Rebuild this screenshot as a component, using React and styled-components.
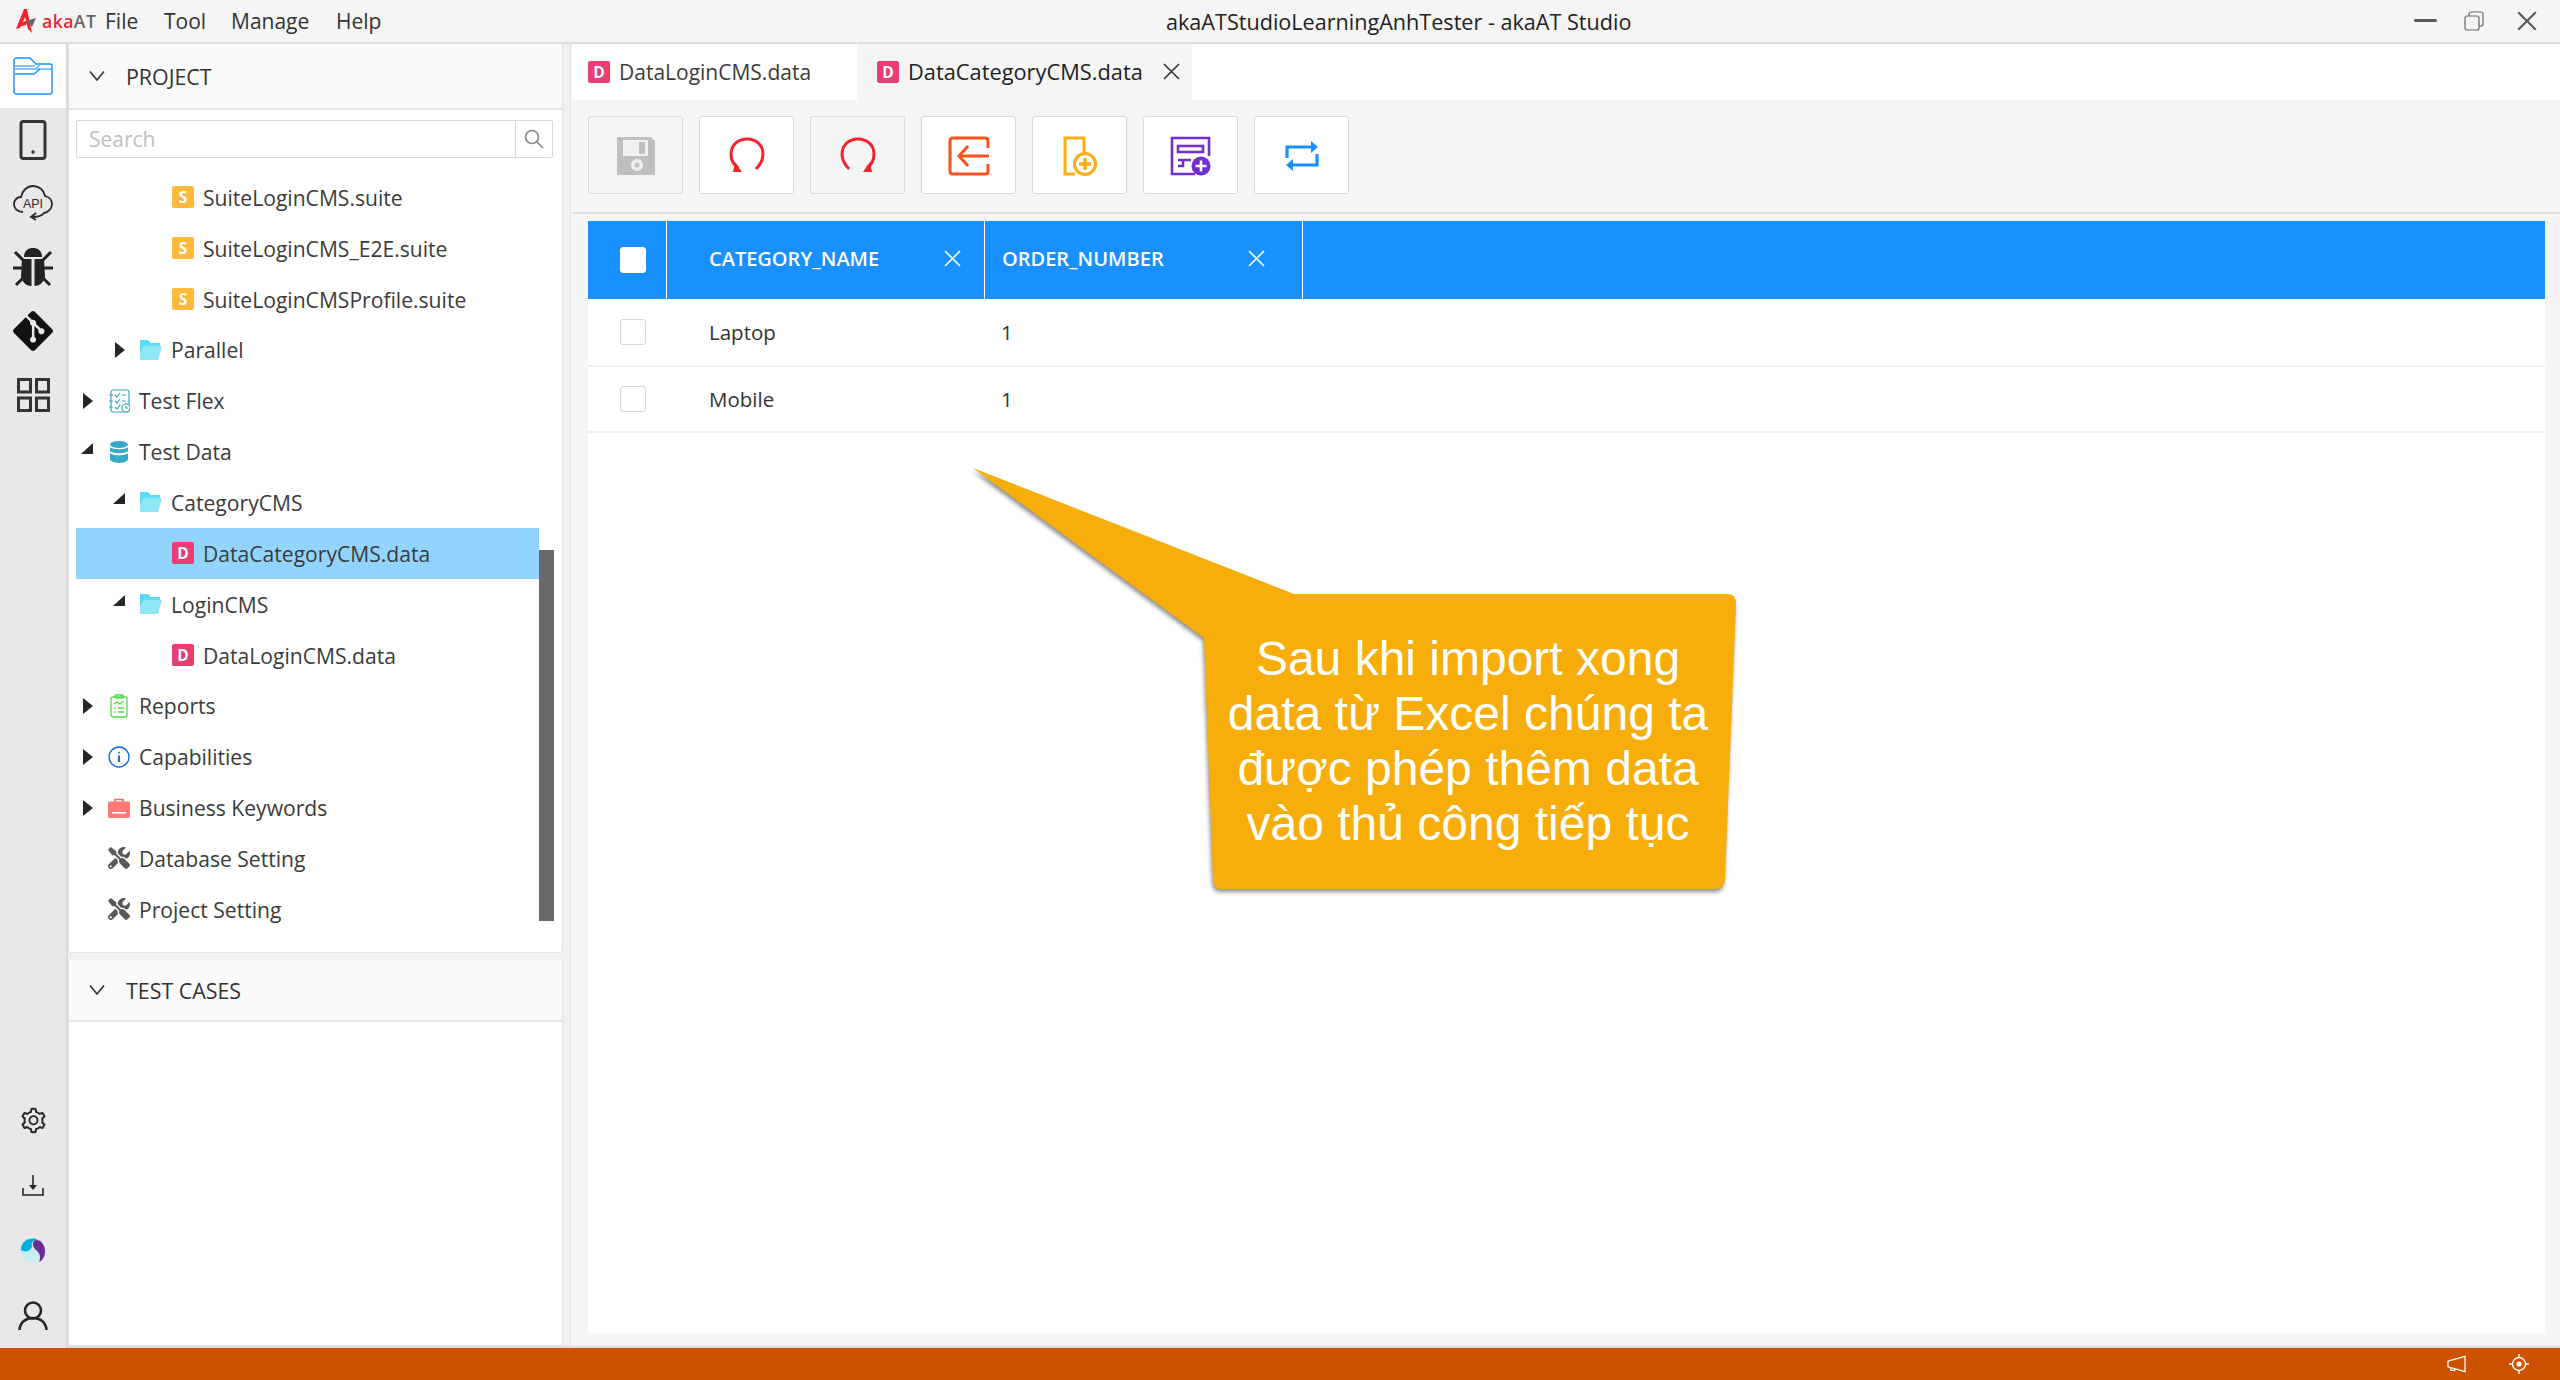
import React from 'react'
import styled, { createGlobalStyle } from 'styled-components'
import { SiGit } from 'react-icons/si'
import { AiOutlineSetting } from 'react-icons/ai'
import { FaTools } from 'react-icons/fa'

const GlobalStyle = createGlobalStyle`
  html, body { margin: 0; padding: 0; }
  body {
    width: 2560px;
    height: 1380px;
    overflow: hidden;
    font-family: "Open Sans", "Noto Sans", sans-serif;
    color: #333;
  }
  * { box-sizing: border-box; }
`

const Page = styled.div`
  width: 2560px;
  height: 1380px;
  display: flex;
  flex-direction: column;
  background: #f5f5f5;
`

const TitleBar = styled.div`
  height: 44px;
  flex: none;
  display: flex;
  align-items: center;
  background: #f5f5f5;
  border-bottom: 2px solid #dcdcdc;
`

const TitleLeft = styled.div`
  width: 1166px;
  display: flex;
  align-items: center;
  padding-left: 16px;
`

const LogoText = styled.span`
  margin-left: 6px;
  font-size: 17.5px;
  font-weight: 600;
  color: #f5222d;
  letter-spacing: 0.5px;
  width: 47px;
  em { font-style: normal; color: #666; }
`

const Menu = styled.div`
  display: flex;
  margin-left: 16px;
`

const MenuItem = styled.div`
  font-size: 21px;
  color: #333;
  width: ${p => p.$w}px;
`

const AppTitle = styled.div`
  width: 467px;
  font-size: 21.6px;
  color: #222;
  white-space: nowrap;
`

const WindowControls = styled.div`
  margin-left: auto;
  display: flex;
  align-items: center;
  gap: 27px;
  padding-right: 23px;
  height: 100%;
`

const CloseSlot = styled.span`
  display: flex;
  margin-left: 6px;
`

const Body = styled.div`
  flex: 1;
  min-height: 0;
  display: flex;
`

const Rail = styled.div`
  width: 68px;
  flex: none;
  display: flex;
  flex-direction: column;
  justify-content: space-between;
  background: #e8e8e8;
  border-right: 2px solid #d9d9d9;
`

const RailGroup = styled.div`
  display: flex;
  flex-direction: column;
`

const RailItem = styled.div`
  height: ${p => p.$h || 63.8}px;
  display: flex;
  align-items: center;
  justify-content: center;
  background: ${p => (p.$active ? '#fff' : 'transparent')};
  color: #222;
`

const Sidebar = styled.div`
  width: 503px;
  flex: none;
  display: flex;
  flex-direction: column;
  gap: 7px;
  padding-right: 7px;
  background: #f0f0f0;
  border-right: 1px solid #e4e4e4;
  border-bottom: 2px solid #dcdcdc;
`

const Panel = styled.div`
  display: flex;
  flex-direction: column;
  flex: ${p => (p.$grow ? 1 : 'none')};
  height: ${p => (p.$h ? `${p.$h}px` : 'auto')};
  background: #fff;
  border: 1px solid #e2e2e2;
  border-top: 0;
  border-radius: 0 0 3px 3px;
`

const PanelHead = styled.div`
  height: ${p => p.$h}px;
  flex: none;
  display: flex;
  align-items: center;
  padding-left: 20px;
  gap: 21px;
  background: #fafafa;
  border-bottom: 2px solid #e4e4e4;
  font-size: 21.4px;
  color: #333;
`

const SearchBox = styled.div`
  display: flex;
  width: 477px;
  height: 38px;
  margin: 10px 0 14px 7px;
  border: 1px solid #d9d9d9;
  border-radius: 2px;
`

const SearchInput = styled.div`
  flex: 1;
  padding-left: 12px;
  font-size: 21px;
  line-height: 36px;
  color: #bfbfbf;
`

const SearchBtn = styled.div`
  width: 37px;
  display: flex;
  align-items: center;
  justify-content: center;
  border-left: 1px solid #d9d9d9;
  color: #8c8c8c;
`

const TreeArea = styled.div`
  display: flex;
  margin-left: 7px;
`

const Tree = styled.div`
  width: 463px;
`

const TreeRow = styled.div`
  height: 50.85px;
  display: flex;
  align-items: center;
  padding-left: ${p => 7 + p.$level * 32}px;
  background: ${p => (p.$selected ? '#91d5ff' : 'transparent')};
  font-size: 21.1px;
  color: #3b3b3b;
`

const CaretSlot = styled.span`
  width: ${p => (p.$open ? 27 : 25)}px;
  flex: none;
  display: flex;
  align-items: center;
  margin-top: ${p => (p.$open ? -6 : 0)}px;
  margin-left: ${p => (p.$open ? -2 : 0)}px;
`

const IconSlot = styled.span`
  width: 22px;
  height: 24px;
  flex: none;
  display: flex;
  align-items: center;
  justify-content: center;
  margin-right: 9px;
`

const Badge = styled.span`
  width: 22px;
  height: 22px;
  flex: none;
  display: flex;
  align-items: center;
  justify-content: center;
  border-radius: 2px;
  background: ${p => (p.$kind === 'S' ? '#ffba3b' : '#ec3d72')};
  color: #fff;
  font-size: 15.5px;
  font-weight: 700;
`

const ScrollTrack = styled.div`
  width: 15px;
`

const ScrollThumb = styled.div`
  width: 15px;
  height: 371px;
  margin-top: 378px;
  background: #696969;
`

const Main = styled.div`
  flex: 1;
  min-width: 0;
  display: flex;
  flex-direction: column;
  padding-left: 1px;
  background: #f5f5f5;
  border-bottom: 2px solid #dcdcdc;
`

const Tabs = styled.div`
  height: 56px;
  flex: none;
  display: flex;
  background: #fff;
`

const Tab = styled.div`
  width: ${p => p.$w}px;
  display: flex;
  align-items: center;
  gap: 9px;
  padding-left: ${p => p.$pad}px;
  padding-bottom: 1px;
  background: ${p => (p.$active ? '#f5f5f5' : '#fff')};
  font-size: ${p => (p.$active ? 21.8 : 21)}px;
  font-weight: ${p => (p.$active ? 500 : 400)};
  color: ${p => (p.$active ? '#222' : '#3b3b3b')};
`

const TabClose = styled.span`
  display: flex;
  margin-left: 11px;
`

const Toolbar = styled.div`
  height: 114px;
  flex: none;
  display: flex;
  gap: 16px;
  padding: 16px 0 0 16px;
  border-bottom: 2px solid #dedede;
`

const ToolButton = styled.div`
  width: 95px;
  height: 78px;
  display: flex;
  align-items: center;
  justify-content: center;
  padding-top: 1px;
  background: ${p => (p.$muted ? '#f5f5f5' : '#fff')};
  border: 1px solid #d9d9d9;
  border-radius: 3px;
`

const Content = styled.div`
  flex: 1;
  min-height: 0;
  position: relative;
  margin: 7px 15px 13px 16px;
  background: #fff;
`

const HeaderRow = styled.div`
  height: 78px;
  display: flex;
  align-items: stretch;
  background: #1890ff;
  color: #fff;
  font-size: 20px;
  font-weight: 600;
`

const CheckCell = styled.div`
  width: 78px;
  flex: none;
  display: flex;
  align-items: center;
  padding-left: 32px;
`

const HeadCell = styled.div`
  width: ${p => p.$w}px;
  flex: none;
  display: flex;
  align-items: center;
  justify-content: space-between;
  padding: 0 ${p => p.$right}px 3px ${p => p.$left}px;
  border-left: 1px solid #fff;
  border-right: ${p => (p.$last ? '1px solid #fff' : '0')};
`

const Check = styled.span`
  width: 26px;
  height: 26px;
  background: #fff;
  border: 1px solid ${p => (p.$head ? '#fff' : '#d9d9d9')};
  border-radius: 3px;
`

const DataRow = styled.div`
  height: ${p => p.$h}px;
  display: flex;
  align-items: center;
  border-bottom: 2px solid #f0f0f0;
  font-size: 20.5px;
  font-weight: 500;
  color: #333;
`

const NameCell = styled.div`
  width: 293px;
  flex: none;
  padding-left: 43px;
`

const OrderCell = styled.div`
  padding-left: 42px;
`

const Callout = styled.div`
  position: absolute;
  left: 382px;
  top: 244px;
  width: 770px;
  height: 430px;
`

const CalloutShape = styled.svg`
  position: absolute;
  inset: 0;
  filter: drop-shadow(-1px 3px 2px rgba(0, 0, 0, 0.45));
`

const CalloutText = styled.div`
  position: absolute;
  left: 243px;
  top: 166px;
  width: 510px;
  text-align: center;
  font-family: "Liberation Sans", Arial, sans-serif;
  font-size: 48px;
  line-height: 55px;
  color: #fff;
`

const StatusBar = styled.div`
  height: 32px;
  flex: none;
  display: flex;
  align-items: center;
  justify-content: flex-end;
  gap: 43px;
  padding-right: 31px;
  background: #cc5200;
`

const Chevron = () => (
  <svg width="16" height="12" viewBox="0 0 16 12" fill="none" stroke="#333" strokeWidth="1.6">
    <path d="M1 1.5 L8 10 L15 1.5" />
  </svg>
)

const Cross = ({ color = '#333', size = 17, width = 1.6 }) => (
  <svg width={size} height={size} viewBox="0 0 17 17" fill="none" stroke={color} strokeWidth={width}>
    <path d="M1 1 L16 16 M16 1 L1 16" />
  </svg>
)

const Caret = ({ open }) =>
  open ? (
    <svg width="13" height="12" viewBox="0 0 13 12"><path d="M12 0 V11 H0 Z" fill="#262626" /></svg>
  ) : (
    <svg width="10" height="16" viewBox="0 0 10 16"><path d="M0 0 L10 8 L0 16 Z" fill="#262626" /></svg>
  )

const FolderIcon = () => (
  <svg width="22" height="20" viewBox="0 0 22 20">
    <path d="M0 0 H8 L11 3 H20 V7 H4 L0 20 Z" fill="#5cdbf7" />
    <path d="M4 6 H22 L18 20 H0 V12 Z" fill="#8fe6f5" />
  </svg>
)

const FlexIcon = () => (
  <svg width="22" height="24" viewBox="0 0 22 24" fill="none" stroke="#3aa7c2" strokeWidth="1.2">
    <rect x="3" y="1" width="18" height="22" rx="2" />
    <path d="M1 6 H5 M1 12 H5 M1 18 H5" />
    <path d="M7 6 L9 8 L12 4 M7 12 L9 14 L12 10 M7 18 L9 20 L12 16 M14 6 H18 M14 12 H18" />
    <circle cx="18" cy="19" r="4" fill="#fff" />
    <path d="M18 17 V19 H20" />
  </svg>
)

const DbIcon = () => (
  <svg width="18" height="22" viewBox="0 0 18 22" fill="#36a9c4">
    <ellipse cx="9" cy="3.5" rx="9" ry="3.5" />
    <path d="M0 6 C2 9 16 9 18 6 V10 C16 13 2 13 0 10 Z" />
    <path d="M0 12 C2 15 16 15 18 12 V18.5 C16 23 2 23 0 18.5 Z" />
  </svg>
)

const ReportIcon = () => (
  <svg width="18" height="24" viewBox="0 0 18 24" fill="none" stroke="#52d94a" strokeWidth="1.3">
    <rect x="1" y="3" width="16" height="20" rx="2" />
    <rect x="5" y="1" width="8" height="3" rx="1" />
    <path d="M4 10 L7 8 L10 10 L14 7 M4 14 H5.5 M8 14 H14 M4 18 H5.5 M8 18 H14" />
  </svg>
)

const InfoIcon = () => (
  <svg width="22" height="22" viewBox="0 0 22 22" fill="none" stroke="#1668dc" strokeWidth="1.4">
    <circle cx="11" cy="11" r="10" />
    <path d="M11 9.5 V16" strokeWidth="2" />
    <circle cx="11" cy="6.5" r="1" fill="#1668dc" stroke="none" />
  </svg>
)

const CaseIcon = () => (
  <svg width="22" height="20" viewBox="0 0 22 20">
    <path d="M7 4 V1.5 H15 V4" fill="none" stroke="#f56a6a" strokeWidth="1.6" />
    <rect y="3.5" width="22" height="16.5" rx="2" fill="#ff7875" />
    <rect x="4" y="14" width="14" height="1.6" fill="#fff" />
  </svg>
)

const ToolsIcon = () => <FaTools size={22} color="#595959" />

const Floppy = () => (
  <svg width="40" height="40" viewBox="0 0 40 40">
    <path d="M1 1 H35 L39 5 V39 H1 Z" fill="#bfbfbf" />
    <rect x="7" y="4" width="25" height="16" fill="#f0f0f0" />
    <rect x="23" y="6" width="6" height="12" fill="#bfbfbf" />
    <circle cx="21" cy="29" r="6" fill="#f0f0f0" />
    <circle cx="21" cy="29" r="2.5" fill="#bfbfbf" />
  </svg>
)

const RotateArrow = ({ flip }) => (
  <svg width="40" height="40" viewBox="0 0 40 40" fill="none" style={flip ? { transform: 'scaleX(-1)' } : undefined}>
    <path d="M29 33 C33 29 36 24 36 18 C36 9 29 3 20 3 C11 3 4 9 4 18 C4 24 7 29 11 32" stroke="#f5222d" strokeWidth="3" />
    <path d="M6 36 L15 36 L8 26 Z" fill="#f5222d" />
  </svg>
)

const ImportIcon = () => (
  <svg width="42" height="40" viewBox="0 0 42 40" fill="none" stroke="#fa541c" strokeWidth="3">
    <path d="M40 12 V5 C40 3 39 2 37 2 H5 C3 2 2 3 2 5 V35 C2 37 3 38 5 38 H37 C39 38 40 37 40 35 V28" />
    <path d="M41 20 H11 M20 10 L11 20 L20 30" />
  </svg>
)

const FilePlusIcon = () => (
  <svg width="34" height="40" viewBox="0 0 34 40" fill="none" stroke="#faad14" strokeWidth="3">
    <path d="M12 38 H2 V2 H21 V17" />
    <circle cx="22" cy="28" r="10.5" fill="#fff" />
    <path d="M22 22 V34 M16 28 H28" strokeWidth="3.4" />
  </svg>
)

const FormPlusIcon = () => (
  <svg width="42" height="40" viewBox="0 0 42 40" fill="none" stroke="#722ed1" strokeWidth="2.6">
    <path d="M25 38 H2 V2 H39 V20" />
    <rect x="8" y="10" width="25" height="6" />
    <path d="M8 24 H21 M8 30 H13 V24" />
    <circle cx="31" cy="30" r="9.5" fill="#722ed1" stroke="none" />
    <path d="M31 24.5 V35.5 M25.5 30 H36.5" stroke="#fff" strokeWidth="2.6" />
  </svg>
)

const SwapIcon = () => (
  <svg width="34" height="32" viewBox="0 0 34 32" fill="none" stroke="#1890ff" strokeWidth="3.2">
    <path d="M2 18 V7 H28" />
    <path d="M32 14 V25 H6" />
    <path d="M26 1 L33 7 L26 13 Z" fill="#1890ff" stroke="none" />
    <path d="M8 19 L1 25 L8 31 Z" fill="#1890ff" stroke="none" />
  </svg>
)

const LogoMark = () => (
  <svg width="20" height="24" viewBox="0 0 20 24">
    <path d="M8 0 L11 0 L16 24 L12 20 L9 8 L4 19 L0 20 Z" fill="#f5222d" />
    <path d="M10 12 L20 9 L16 18 Z" fill="#666" />
    <path d="M2 14 L12 11.5 L10 16 L2 18 Z" fill="#f5222d" />
  </svg>
)

const FolderRail = () => (
  <svg width="40" height="38" viewBox="0 0 40 38" fill="none" stroke="#1890ff" strokeWidth="1.4">
    <path d="M1 36 V3 C1 2 2 1 3 1 H17 L23 7 H37 C38 7 39 8 39 9 V35 C39 36 38 37 37 37 H3 C2 37 1 36 1 35" />
    <path d="M2 9 H22 M2 12 H39 M22 12 L27 8" strokeOpacity="0.7" />
    <path d="M2 17 H21 L27 12" />
  </svg>
)

const PhoneIcon = () => (
  <svg width="28" height="40" viewBox="0 0 28 40" fill="none" stroke="#333" strokeWidth="3">
    <rect x="2" y="1.5" width="24" height="37" rx="2.5" />
    <circle cx="14" cy="32" r="1.7" fill="#333" stroke="none" />
  </svg>
)

const ApiIcon = () => (
  <svg width="40" height="36" viewBox="0 0 40 36" fill="none" stroke="#2b2b2b" strokeWidth="1.8">
    <path d="M10 27 C4 27 1 23 1 19 C1 15 4 12 8 12 C9 6 14 1 20 1 C26 1 31 5 32 11 C36 12 39 15 39 19 C39 23 36 27 31 28 C29 31 25 32 19 32" />
    <path d="M23 28 L18 32 L23 35" />
    <text x="20" y="23" textAnchor="middle" fontSize="12.5" fontFamily="'Liberation Sans', sans-serif" fill="#2b2b2b" stroke="none">API</text>
  </svg>
)

const BugIcon = () => (
  <svg width="40" height="42" viewBox="0 0 40 42" fill="#222">
    <path d="M11 11 C11 5 15 2 20 2 C25 2 29 5 29 11 Z" />
    <path d="M9 13 H18.5 V40 C13 40 9 36 8 30 Z" />
    <path d="M31 13 H21.5 V40 C27 40 31 36 32 30 Z" />
    <path d="M2 6 L10 14 M38 6 L30 14 M0 22 H9 M40 22 H31 M3 39 L10 32 M37 39 L30 32" stroke="#222" strokeWidth="3" />
  </svg>
)

const GridIcon = () => (
  <svg width="33" height="34" viewBox="0 0 33 34" fill="none" stroke="#333" strokeWidth="3">
    <rect x="1.5" y="1.5" width="12" height="12.5" />
    <rect x="19.5" y="1.5" width="12" height="12.5" />
    <rect x="1.5" y="20" width="12" height="12.5" />
    <rect x="19.5" y="20" width="12" height="12.5" />
  </svg>
)

const DownloadIcon = () => (
  <svg width="22" height="21" viewBox="0 0 22 21" fill="none" stroke="#262626" strokeWidth="1.6">
    <path d="M1 13 V20 H21 V13" />
    <path d="M11 0 V12" />
    <path d="M7 10 L15 10 L11 15 Z" fill="#262626" stroke="none" />
  </svg>
)

const SwirlIcon = () => (
  <svg width="26" height="26" viewBox="0 0 26 26">
    <circle cx="13" cy="13" r="12.5" fill="#cbecf1" />
    <path d="M1 12 C1 5 6 .5 13 .5 C15 .5 17 1 18 1.5 C13 2 11 5 12 8 C11 13 6 15 1 12 Z" fill="#00afd7" />
    <path d="M14 3 C18 0 25 5 25 13 C25 18 23 22 19 24 C21 19 20 15 16 12 C13 9 12 6 14 3 Z" fill="#6a2c91" />
  </svg>
)

const UserIcon = () => (
  <svg width="30" height="30" viewBox="0 0 30 30" fill="none" stroke="#262626" strokeWidth="2.6">
    <circle cx="15" cy="9.5" r="8" />
    <path d="M1.5 29 C2 21 8 17 15 17 C22 17 28 21 28.5 29" />
  </svg>
)

const SearchIcon = () => (
  <svg width="20" height="20" viewBox="0 0 20 20" fill="none" stroke="#8c8c8c" strokeWidth="1.7">
    <circle cx="8" cy="8" r="6.5" />
    <path d="M12.8 12.8 L19 19" />
  </svg>
)

const MegaphoneIcon = () => (
  <svg width="19" height="18" viewBox="0 0 20 18" fill="none" stroke="#fff" strokeWidth="1.3">
    <path d="M19 1 V17 L1 12 V6 Z" />
    <path d="M4 13 V15.5 L8 16 L8.6 14" />
  </svg>
)

const LocateIcon = () => (
  <svg width="20" height="20" viewBox="0 0 20 20" fill="none" stroke="#fff" strokeWidth="1.4">
    <circle cx="10" cy="10" r="6.5" />
    <circle cx="10" cy="10" r="2.6" fill="#fff" stroke="none" />
    <path d="M10 0 V3.5 M10 16.5 V20 M0 10 H3.5 M16.5 10 H20" />
  </svg>
)

const treeRows = [
  { level: 2, badge: 'S', label: 'SuiteLoginCMS.suite' },
  { level: 2, badge: 'S', label: 'SuiteLoginCMS_E2E.suite' },
  { level: 2, badge: 'S', label: 'SuiteLoginCMSProfile.suite' },
  { level: 1, caret: 'closed', icon: <FolderIcon />, label: 'Parallel' },
  { level: 0, caret: 'closed', icon: <FlexIcon />, label: 'Test Flex' },
  { level: 0, caret: 'open', icon: <DbIcon />, label: 'Test Data' },
  { level: 1, caret: 'open', icon: <FolderIcon />, label: 'CategoryCMS' },
  { level: 2, badge: 'D', label: 'DataCategoryCMS.data', selected: true },
  { level: 1, caret: 'open', icon: <FolderIcon />, label: 'LoginCMS' },
  { level: 2, badge: 'D', label: 'DataLoginCMS.data' },
  { level: 0, caret: 'closed', icon: <ReportIcon />, label: 'Reports' },
  { level: 0, caret: 'closed', icon: <InfoIcon />, label: 'Capabilities' },
  { level: 0, caret: 'closed', icon: <CaseIcon />, label: 'Business Keywords' },
  { level: 0, caret: 'none', icon: <ToolsIcon />, label: 'Database Setting' },
  { level: 0, caret: 'none', icon: <ToolsIcon />, label: 'Project Setting' },
]

const tableRows = [
  { name: 'Laptop', order: '1', h: 68 },
  { name: 'Mobile', order: '1', h: 66 },
]

export default function App() {
  return (
    <Page>
      <GlobalStyle />
      <TitleBar>
        <TitleLeft>
          <LogoMark />
          <LogoText>aka<em>AT</em></LogoText>
          <Menu>
            <MenuItem $w={59}>File</MenuItem>
            <MenuItem $w={67}>Tool</MenuItem>
            <MenuItem $w={105}>Manage</MenuItem>
            <MenuItem $w={60}>Help</MenuItem>
          </Menu>
        </TitleLeft>
        <AppTitle>akaATStudioLearningAnhTester - akaAT Studio</AppTitle>
        <WindowControls>
          <svg width="23" height="4" viewBox="0 0 23 4"><rect width="23" height="3" rx="1.5" fill="#595959" /></svg>
          <svg width="20" height="20" viewBox="0 0 20 20" fill="none" stroke="#666" strokeWidth="1.2">
            <rect x="1" y="5" width="14" height="14" rx="2" />
            <path d="M5 5 V3 C5 2 6 1 7 1 H17 C18 1 19 2 19 3 V13 C19 14 18 15 17 15 H15" />
          </svg>
          <CloseSlot><Cross color="#595959" size={20} width={1.8} /></CloseSlot>
        </WindowControls>
      </TitleBar>

      <Body>
        <Rail>
          <RailGroup>
            <RailItem $active><FolderRail /></RailItem>
            <RailItem><PhoneIcon /></RailItem>
            <RailItem><ApiIcon /></RailItem>
            <RailItem><BugIcon /></RailItem>
            <RailItem><SiGit size={40} color="#111" /></RailItem>
            <RailItem><GridIcon /></RailItem>
          </RailGroup>
          <RailGroup>
            <RailItem $h={65}><AiOutlineSetting size={29} color="#2b2b2b" /></RailItem>
            <RailItem $h={65}><DownloadIcon /></RailItem>
            <RailItem $h={65}><SwirlIcon /></RailItem>
            <RailItem $h={65}><UserIcon /></RailItem>
          </RailGroup>
        </Rail>

        <Sidebar>
          <Panel $h={909}>
            <PanelHead $h={66}><Chevron />PROJECT</PanelHead>
            <SearchBox>
              <SearchInput>Search</SearchInput>
              <SearchBtn><SearchIcon /></SearchBtn>
            </SearchBox>
            <TreeArea>
              <Tree>
                {treeRows.map(row => (
                  <TreeRow key={row.label} $level={row.level} $selected={row.selected}>
                    <CaretSlot $open={row.caret === 'open'}>
                      {row.caret && row.caret !== 'none' && <Caret open={row.caret === 'open'} />}
                    </CaretSlot>
                    <IconSlot>{row.badge ? <Badge $kind={row.badge}>{row.badge}</Badge> : row.icon}</IconSlot>
                    {row.label}
                  </TreeRow>
                ))}
              </Tree>
              <ScrollTrack><ScrollThumb /></ScrollTrack>
            </TreeArea>
          </Panel>
          <Panel $grow>
            <PanelHead $h={62}><Chevron />TEST CASES</PanelHead>
          </Panel>
        </Sidebar>

        <Main>
          <Tabs>
            <Tab $w={285} $pad={16}><Badge $kind="D">D</Badge>DataLoginCMS.data</Tab>
            <Tab $active $w={335} $pad={20}>
              <Badge $kind="D">D</Badge>DataCategoryCMS.data
              <TabClose><Cross /></TabClose>
            </Tab>
          </Tabs>
          <Toolbar>
            <ToolButton $muted><Floppy /></ToolButton>
            <ToolButton><RotateArrow /></ToolButton>
            <ToolButton $muted><RotateArrow flip /></ToolButton>
            <ToolButton><ImportIcon /></ToolButton>
            <ToolButton><FilePlusIcon /></ToolButton>
            <ToolButton><FormPlusIcon /></ToolButton>
            <ToolButton><SwapIcon /></ToolButton>
          </Toolbar>
          <Content>
            <HeaderRow>
              <CheckCell><Check $head /></CheckCell>
              <HeadCell $w={318} $left={42} $right={23}>CATEGORY_NAME<Cross color="#fff" /></HeadCell>
              <HeadCell $w={319} $last $left={17} $right={37}>ORDER_NUMBER<Cross color="#fff" /></HeadCell>
            </HeaderRow>
            {tableRows.map(row => (
              <DataRow key={row.name} $h={row.h}>
                <CheckCell><Check /></CheckCell>
                <NameCell>{row.name}</NameCell>
                <OrderCell>{row.order}</OrderCell>
              </DataRow>
            ))}
            <Callout>
              <CalloutShape width="770" height="430" viewBox="0 0 770 430">
                <path d="M3 3 L324 129 H758 Q766 129 766 139 L755 414 Q755 424 745 424 H252 Q243 424 243 414 L234 173 Z" fill="#f8ae0a" />
              </CalloutShape>
              <CalloutText>
                Sau khi import xong<br />
                data từ Excel chúng ta<br />
                được phép thêm data<br />
                vào thủ công tiếp tục
              </CalloutText>
            </Callout>
          </Content>
        </Main>
      </Body>

      <StatusBar>
        <MegaphoneIcon />
        <LocateIcon />
      </StatusBar>
    </Page>
  )
}
